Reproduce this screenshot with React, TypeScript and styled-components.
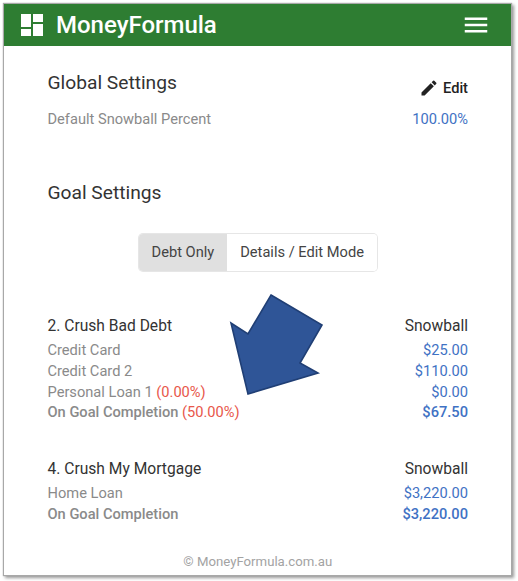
import styled, { createGlobalStyle } from "styled-components"
import { MdEdit, MdMenu } from "react-icons/md"

const Global = createGlobalStyle`
html, body { margin:0; padding:0; background:#fff; }
body { font-family:Roboto, "Liberation Sans", sans-serif; }
`

const Page = styled.div`
width:518px;
height:581px;
padding:4px 7px 6px 4px;
box-sizing:border-box;
position:relative;
overflow:hidden;
`
const Frame = styled.div`
height:100%;
display:flex;
flex-direction:column;
background:#fff;
box-shadow:0 0 1px 1px #a8a8a8, 2px 2px 3px 1px #9a9a9a;
`
const Header = styled.header`
height:42px;
flex:none;
display:flex;
align-items:center;
justify-content:space-between;
padding:0 20px 0 17px;
background:#2e7d32;
color:#fff;
`
const Brand = styled.div`
display:flex;
align-items:center;
gap:13px;
font-size:24px;
font-weight:500;
`
const Content = styled.main`
flex:1;
display:flex;
flex-direction:column;
padding:0 43px 0 43.5px;
`
const TitleRow = styled.div<{ $top: number }>`
display:flex;
justify-content:space-between;
align-items:flex-end;
margin-top:${p => p.$top}px;
`
const Title = styled.h2`
margin:0;
font-size:19.2px;
font-weight:400;
line-height:26px;
color:#333;
`
const EditLink = styled.div`
display:flex;
align-items:center;
gap:4px;
margin-bottom:-3px;
font-size:14.65px;
font-weight:500;
line-height:22px;
color:#222;
`
const Row = styled.div<{ $bold?: boolean }>`
display:flex;
justify-content:space-between;
font-size:14.65px;
line-height:20.7px;
color:#8a8a8a;
font-weight:${p => (p.$bold ? 500 : 400)};
`
const SettingRow = styled(Row)`
margin-top:13px;
`
const Amount = styled.span`
color:#3f72c4;
`
const Warn = styled.span`
color:#e8574a;
font-weight:400;
`
const Toggle = styled.div`
align-self:center;
display:flex;
margin-top:28px;
height:37px;
border-radius:4px;
box-shadow:0 0 0 1px #e6e6e6;
overflow:hidden;
`
const ToggleItem = styled.div<{ $active?: boolean }>`
display:flex;
align-items:center;
padding:0 13px;
font-size:14.65px;
color:#444;
background:${p => (p.$active ? "#e0e0e0" : "#fff")};
`
const Goal = styled.section<{ $top: number }>`
margin-top:${p => p.$top}px;
`
const GoalHead = styled.div`
display:flex;
justify-content:space-between;
font-size:15.6px;
line-height:22px;
color:#333;
margin-bottom:3px;
`
const Footer = styled.footer`
margin-top:auto;
padding-bottom:3px;
text-align:center;
font-size:13.2px;
line-height:20px;
color:#a3a3a3;
`
const Arrow = styled.svg`
position:absolute;
left:0;
top:0;
pointer-events:none;
`

const App = () => {
  return (
    <Page>
      <Global />
      <Frame>
        <Header>
          <Brand>
            <svg width="22" height="22" viewBox="0 0 22 22" fill="#fff">
              <rect x="0" y="0" width="10" height="13" />
              <rect x="12" y="0" width="10" height="8" />
              <rect x="0" y="15" width="10" height="7" />
              <rect x="12" y="10" width="10" height="12" />
            </svg>
            MoneyFormula
          </Brand>
          <MdMenu size={30} />
        </Header>
        <Content>
          <TitleRow $top={24}>
            <Title>Global Settings</Title>
            <EditLink>
              <MdEdit size={20} />
              Edit
            </EditLink>
          </TitleRow>
          <SettingRow>
            <span>Default Snowball Percent</span>
            <Amount>100.00%</Amount>
          </SettingRow>
          <TitleRow $top={50}>
            <Title>Goal Settings</Title>
          </TitleRow>
          <Toggle>
            <ToggleItem $active>Debt Only</ToggleItem>
            <ToggleItem>Details / Edit Mode</ToggleItem>
          </Toggle>
          <Goal $top={44.5}>
            <GoalHead>
              <span>2. Crush Bad Debt</span>
              <span>Snowball</span>
            </GoalHead>
            <Row>
              <span>Credit Card</span>
              <Amount>$25.00</Amount>
            </Row>
            <Row>
              <span>Credit Card 2</span>
              <Amount>$110.00</Amount>
            </Row>
            <Row>
              <span>Personal Loan 1 <Warn>(0.00%)</Warn></span>
              <Amount>$0.00</Amount>
            </Row>
            <Row $bold>
              <span>On Goal Completion <Warn>(50.00%)</Warn></span>
              <Amount>$67.50</Amount>
            </Row>
          </Goal>
          <Goal $top={35}>
            <GoalHead>
              <span>4. Crush My Mortgage</span>
              <span>Snowball</span>
            </GoalHead>
            <Row>
              <span>Home Loan</span>
              <Amount>$3,220.00</Amount>
            </Row>
            <Row $bold>
              <span>On Goal Completion</span>
              <Amount>$3,220.00</Amount>
            </Row>
          </Goal>
          <Footer>© MoneyFormula.com.au</Footer>
        </Content>
      </Frame>
      <Arrow width="518" height="581" viewBox="0 0 518 581">
        <polygon
          points="271,295 322,325 300,363 318,373 248,394 231,323 248,334"
          fill="#2f5597"
          stroke="#203f75"
          strokeWidth="1.6"
        />
      </Arrow>
    </Page>
  )
}

export default App
